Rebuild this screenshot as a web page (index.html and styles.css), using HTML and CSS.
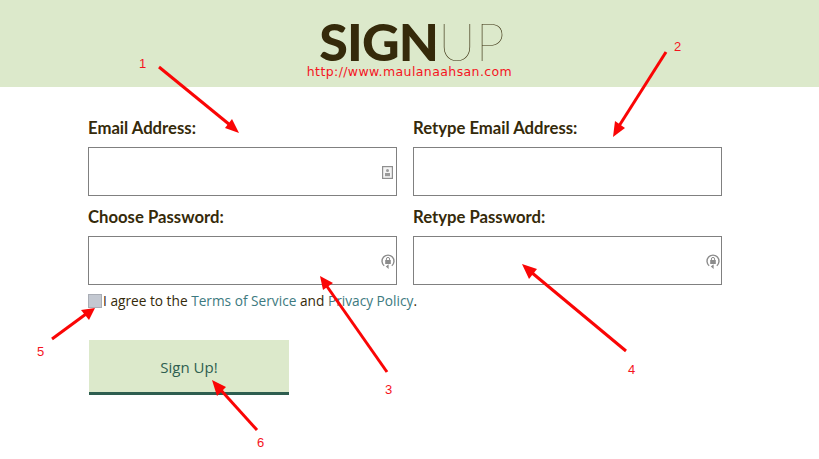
FILE: index.html
```html
<!DOCTYPE html>
<html lang="en">

<head>
    <meta charset="UTF-8">
    <title>Sign Up</title>
    <link rel="stylesheet" href="styles.css">
</head>

<body>
    <header class="banner">
        <h1 class="logo"><span class="logo-bold">SIGN</span><span class="logo-thin">UP</span></h1>
        <div class="site-url">http://www.maulanaahsan.com</div>
    </header>

    <form class="signup">
        <div class="fields">
            <div class="field">
                <label class="field-label">Email Address:</label>
                <div class="field-box">
                    <svg class="contact-icon" viewBox="0 0 11 13">
                        <rect x="0.6" y="0.6" width="9.8" height="11.8" fill="#f4f4f4" stroke="#8f8f8f" stroke-width="1.2" />
                        <circle cx="5.5" cy="4.6" r="1.5" fill="#9a9a9a" />
                        <rect x="3" y="7" width="5" height="3.2" fill="#9a9a9a" />
                    </svg>
                </div>
            </div>
            <div class="field">
                <label class="field-label">Retype Email Address:</label>
                <div class="field-box"></div>
            </div>
            <div class="field">
                <label class="field-label">Choose Password:</label>
                <div class="field-box">
                    <svg class="lock-icon" viewBox="0 0 14 15">
                        <path d="M3.2 11.8A6 6 0 1 1 10.8 11.8" fill="none" stroke="#8c8c8c" stroke-width="1.4" />
                        <path d="M4.8 12.4L7.6 15V10.2z" fill="#8c8c8c" />
                        <rect x="4.2" y="6" width="5.6" height="4" fill="#8c8c8c" />
                        <path d="M5.4 6V5a1.6 1.6 0 0 1 3.2 0V6" fill="none" stroke="#8c8c8c" />
                    </svg>
                </div>
            </div>
            <div class="field">
                <label class="field-label">Retype Password:</label>
                <div class="field-box">
                    <svg class="lock-icon" viewBox="0 0 14 15">
                        <path d="M3.2 11.8A6 6 0 1 1 10.8 11.8" fill="none" stroke="#8c8c8c" stroke-width="1.4" />
                        <path d="M4.8 12.4L7.6 15V10.2z" fill="#8c8c8c" />
                        <rect x="4.2" y="6" width="5.6" height="4" fill="#8c8c8c" />
                        <path d="M5.4 6V5a1.6 1.6 0 0 1 3.2 0V6" fill="none" stroke="#8c8c8c" />
                    </svg>
                </div>
            </div>
        </div>

        <div class="agree">
            <span class="check"></span>
            <span>I agree to the <a class="link">Terms of Service</a> and <a class="link">Privacy Policy</a>.</span>
        </div>

        <div class="submit">Sign Up!</div>
    </form>

    <!-- red notes drawn on top of the screenshot -->
    <svg class="notes" viewBox="0 0 819 459">
        <g class="note-line">
            <path d="M159 67L230 125" />
            <path d="M666 52L619 126" />
            <path d="M387 372L326 285" />
            <path d="M626 351L531 272" />
            <path d="M52 339L86 314" />
            <path d="M257 430L219 388" />
        </g>
        <g class="note-head">
            <path d="M239 133L225 128L232 119z" />
            <path d="M613 137L615 121L625 128z" />
            <path d="M320 276L333 283L323 290z" />
            <path d="M522 264L537 269L529 279z" />
            <path d="M95 308L89 320L81 310z" />
            <path d="M212 380L226 387L217 396z" />
        </g>
        <g class="note-text">
            <text x="139" y="68">1</text>
            <text x="674" y="51">2</text>
            <text x="385" y="394">3</text>
            <text x="628" y="374">4</text>
            <text x="37" y="356">5</text>
            <text x="257" y="447">6</text>
        </g>
    </svg>
</body>

</html>
```

FILE: styles.css
```css
* {
    margin: 0;
    padding: 0;
    box-sizing: border-box;
}

body {
    position: relative;
    width: 819px;
    height: 459px;
    overflow: hidden;
    background-color: white;
    font-family: Lato, sans-serif;
    color: #352a0a;
}

.banner {
    height: 87px;
    padding-top: 16px;
    background-color: #dce9cb;
    text-align: center;
}

.logo {
    height: 49px;
    padding-left: 5px;
    font-size: 52px;
    line-height: 50px;
    font-weight: 400;
    letter-spacing: -1px;
}

.logo-bold {
    font-weight: 900;
    letter-spacing: -0.8px;
}

.logo-thin {
    font-weight: 100;
    letter-spacing: 0;
}

.site-url {
    font-family: "DejaVu Sans", sans-serif;
    font-size: 12.5px;
    line-height: 14px;
    color: #f5141e;
    letter-spacing: 0.4px;
}

.signup {
    padding: 30px 0 0 88px;
}

.fields {
    display: grid;
    grid-template-columns: 309px 309px;
    column-gap: 16px;
    row-gap: 10px;
}

.field-label {
    display: block;
    height: 30px;
    padding-top: 1px;
    font-size: 16.7px;
    line-height: 20px;
    font-weight: 700;
}

.field-box {
    display: flex;
    align-items: center;
    justify-content: flex-end;
    height: 49px;
    border: 1px solid #808080;
}

.contact-icon {
    width: 11px;
    height: 13px;
    margin-right: 3px;
    margin-top: 1px;
}

.lock-icon {
    width: 14px;
    height: 15px;
    margin-right: 1px;
    margin-top: 1px;
}

.agree {
    display: flex;
    align-items: center;
    height: 17px;
    margin-top: 7px;
    font-family: "Open Sans", sans-serif;
    font-size: 13.7px;
}

.check {
    width: 14px;
    height: 14px;
    margin-right: 1px;
    background-color: #c3c8d1;
    border: 1px solid #a9adb5;
}

.link {
    color: #3d7a80;
}

.submit {
    width: 200px;
    height: 55px;
    margin-top: 31px;
    margin-left: 1px;
    padding-top: 17px;
    background-color: #dce9cb;
    border-bottom: 3px solid #2e5e50;
    color: #2e5e50;
    font-family: "Open Sans", sans-serif;
    font-size: 15px;
    line-height: 20px;
    text-align: center;
}

.notes {
    position: absolute;
    left: 0;
    top: 0;
    width: 819px;
    height: 459px;
}

.note-line path {
    fill: none;
    stroke: #fa0505;
    stroke-width: 3;
}

.note-head path {
    fill: #fa0505;
}

.note-text text {
    fill: #f5141e;
    font-family: "Liberation Sans", sans-serif;
    font-size: 13px;
}
```
